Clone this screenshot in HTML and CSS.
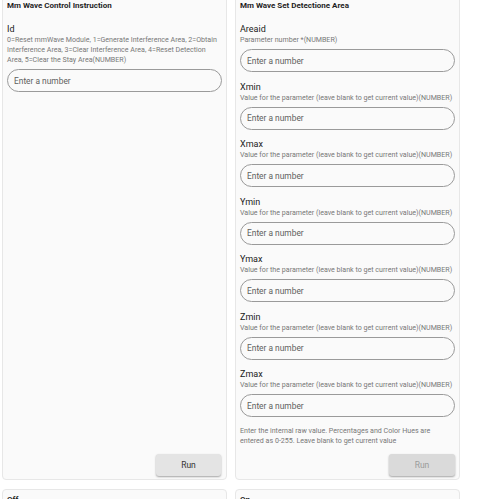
FILE: index.html
```html
<!DOCTYPE html>
<html>
<head>
<meta charset="utf-8">
<link rel="stylesheet" href="styles.css">
</head>
<body>
<div class="grid">
  <section class="card">
    <h2 class="title">Mm Wave Control Instruction</h2>
    <div class="field first">
      <div class="label">Id</div>
      <div class="desc">0=Reset mmWave Module, 1=Generate Interference Area, 2=Obtain Interference Area, 3=Clear Interference Area, 4=Reset Detection Area, 5=Clear the Stay Area(NUMBER)</div>
      <input class="input" type="text" placeholder="Enter a number">
    </div>
    <div class="actions"><button class="btn">Run</button></div>
  </section>
  <section class="card">
    <h2 class="title">Mm Wave Set Detectione Area</h2>
    <div class="field first">
      <div class="label">Areaid</div>
      <div class="desc">Parameter number *(NUMBER)</div>
      <input class="input" type="text" placeholder="Enter a number">
    </div>
    <div class="field">
      <div class="label">Xmin</div>
      <div class="desc">Value for the parameter (leave blank to get current value)(NUMBER)</div>
      <input class="input" type="text" placeholder="Enter a number">
    </div>
    <div class="field">
      <div class="label">Xmax</div>
      <div class="desc">Value for the parameter (leave blank to get current value)(NUMBER)</div>
      <input class="input" type="text" placeholder="Enter a number">
    </div>
    <div class="field">
      <div class="label">Ymin</div>
      <div class="desc">Value for the parameter (leave blank to get current value)(NUMBER)</div>
      <input class="input" type="text" placeholder="Enter a number">
    </div>
    <div class="field">
      <div class="label">Ymax</div>
      <div class="desc">Value for the parameter (leave blank to get current value)(NUMBER)</div>
      <input class="input" type="text" placeholder="Enter a number">
    </div>
    <div class="field">
      <div class="label">Zmin</div>
      <div class="desc">Value for the parameter (leave blank to get current value)(NUMBER)</div>
      <input class="input" type="text" placeholder="Enter a number">
    </div>
    <div class="field">
      <div class="label">Zmax</div>
      <div class="desc">Value for the parameter (leave blank to get current value)(NUMBER)</div>
      <input class="input" type="text" placeholder="Enter a number">
    </div>
    <p class="note">Enter the internal raw value. Percentages and Color Hues are entered as 0-255. Leave blank to get current value</p>
    <div class="actions"><button class="btn disabled" disabled>Run</button></div>
  </section>
  <section class="card">
    <h2 class="title">Off</h2>
  </section>
  <section class="card">
    <h2 class="title">On</h2>
  </section>
</div>
</body>
</html>
```

FILE: styles.css
```css
html, body {
  margin: 0;
  padding: 0;
  background: #ffffff;
  font-family: Roboto, "Liberation Sans", sans-serif;
  color: #212121;
}

.grid {
  display: grid;
  grid-template-columns: 1fr 1fr;
  column-gap: 8px;
  row-gap: 9px;
  width: 458px;
  margin-left: 2px;
  margin-top: -5px;
}

.card {
  background: #fafafa;
  border: 1px solid #e7e7e7;
  border-radius: 4px;
  padding: 4px 4px 3px 4px;
  display: flex;
  flex-direction: column;
  min-height: 40px;
}

.title {
  margin: 0;
  font-size: 8px;
  font-weight: 700;
  line-height: 12px;
  color: #1f1f1f;
}

.field {
  display: flex;
  flex-direction: column;
  margin-top: 8.5px;
}

.field.first {
  margin-top: 11px;
}

.label {
  font-size: 9px;
  font-weight: 400;
  line-height: 12px;
  color: #1a1a1a;
}

.desc {
  font-size: 7.1px;
  line-height: 10px;
  color: #787878;
}

.input {
  margin: 4px 0 0 0;
  height: 23px;
  box-sizing: border-box;
  border: 1px solid #9a9a9a;
  border-radius: 12px;
  background: transparent;
  padding: 0 6px;
  font-family: Roboto, "Liberation Sans", sans-serif;
  font-size: 8.4px;
  color: #333;
  outline: none;
}

.input::placeholder {
  color: #5e5e5e;
}

.note {
  margin: 9px 0 0 0;
  font-size: 7.1px;
  line-height: 10px;
  color: #787878;
}

.actions {
  margin-top: auto;
  padding-top: 8px;
  display: flex;
  justify-content: flex-end;
}

.btn {
  width: 65px;
  height: 22px;
  border: none;
  border-radius: 3px;
  background: #e4e4e4;
  box-shadow: 0 1px 2px rgba(0, 0, 0, 0.35);
  font-family: Roboto, "Liberation Sans", sans-serif;
  font-size: 8.5px;
  color: #333333;
  padding: 0;
  margin-right: 1px;
}

.btn.disabled {
  background: #dadada;
  color: #9a9a9a;
  margin-right: 0;
  width: 66px;
}
```
